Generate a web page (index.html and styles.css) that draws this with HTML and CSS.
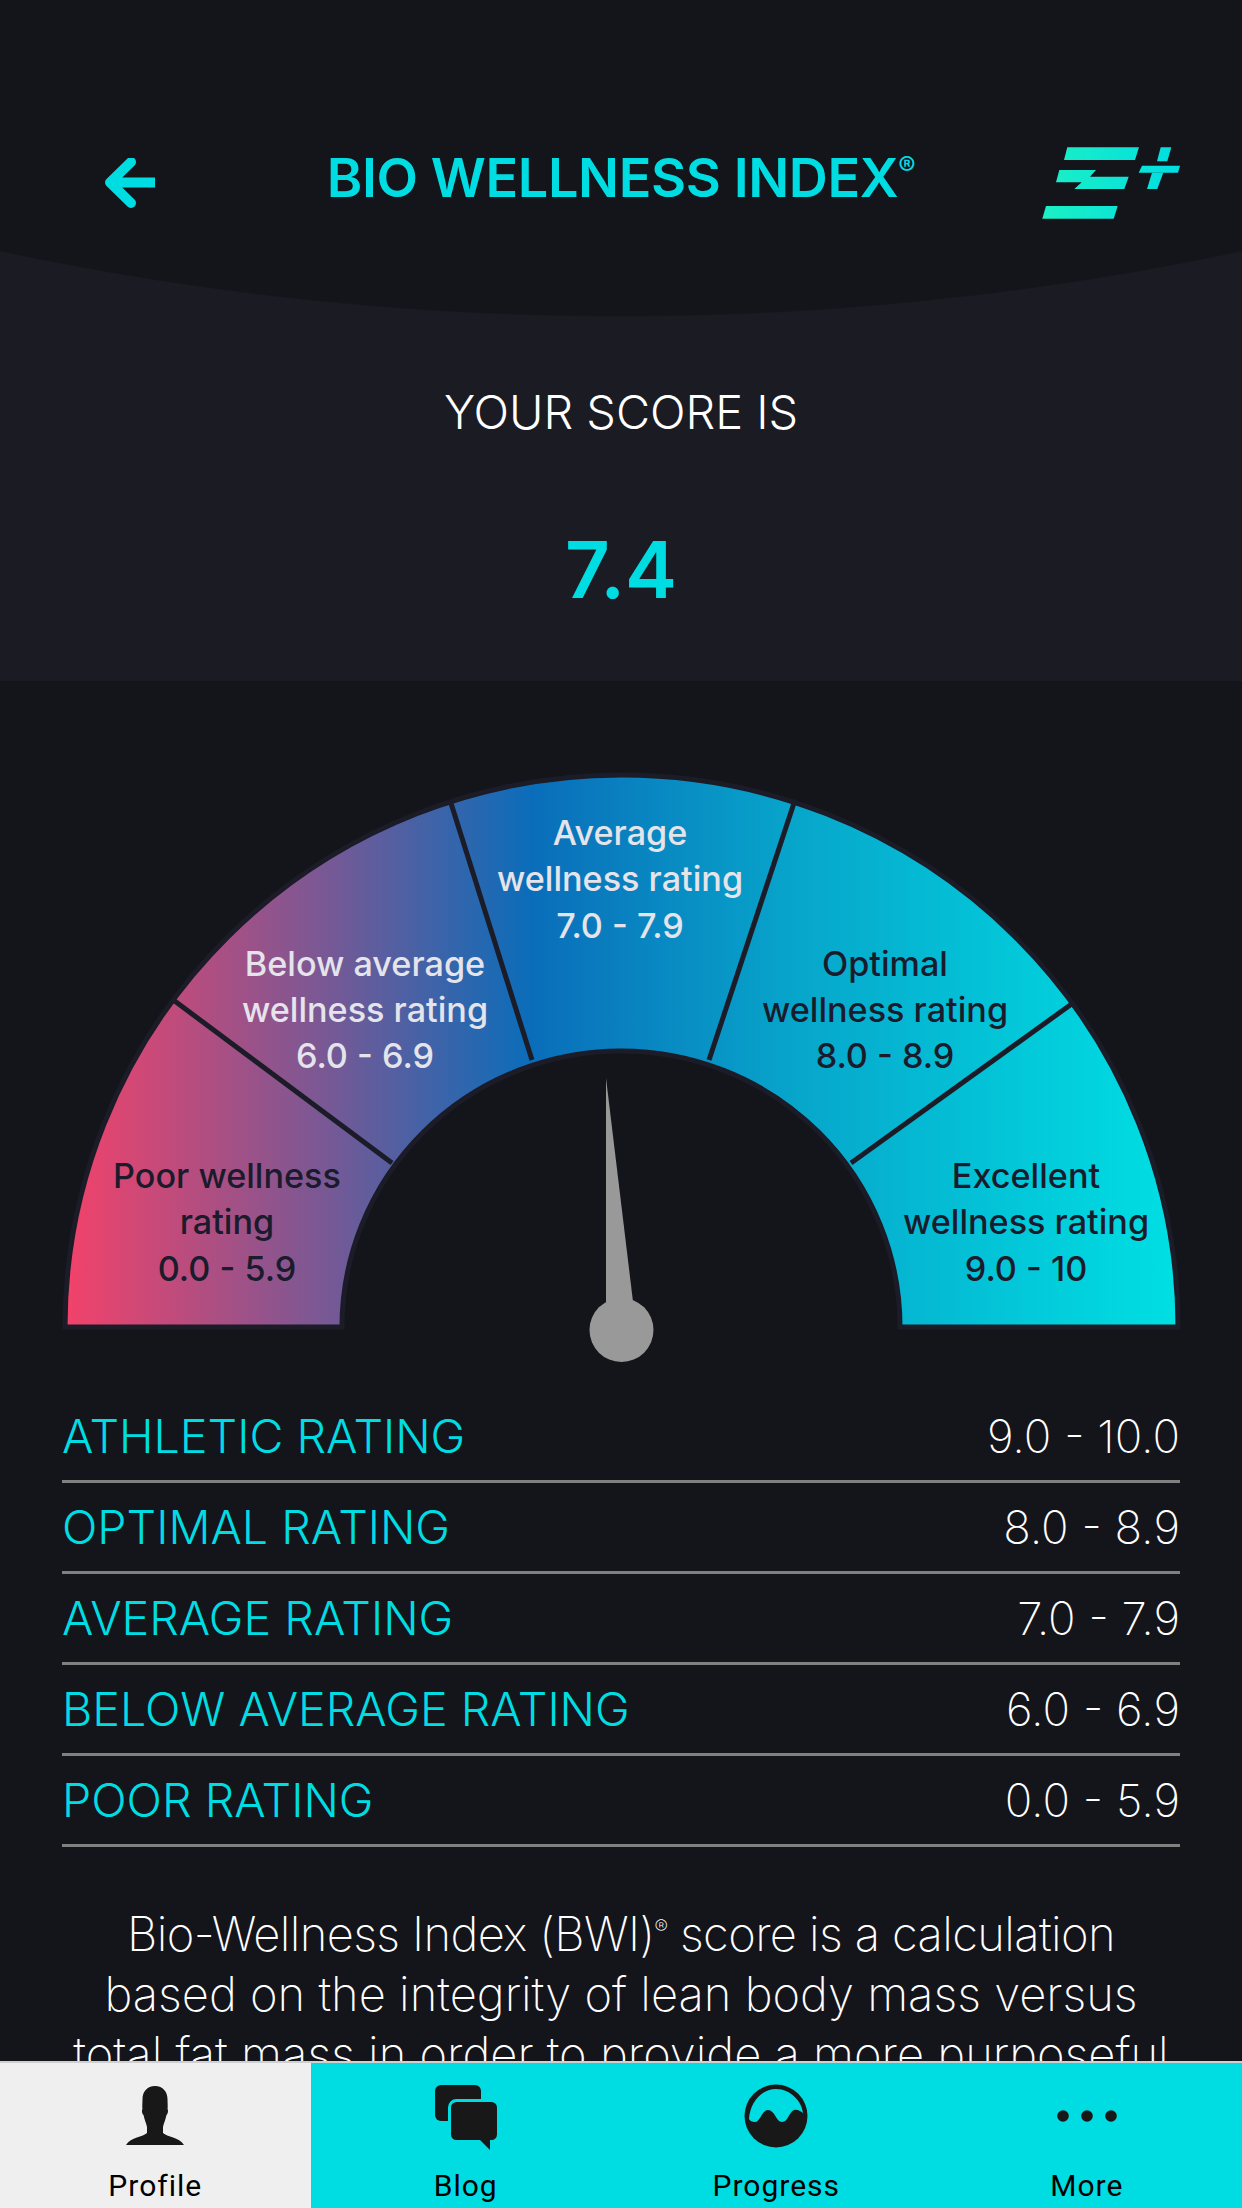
FILE: index.html
```html
<!DOCTYPE html>
<html lang="en">
<head>
    <meta charset="UTF-8">
    <meta name="viewport" content="width=device-width, initial-scale=1.0">
    <title>Bio Wellness Index</title>
    <link rel="stylesheet" href="styles.css">
</head>
<body>
    <div class="page">
        <div class="scroll">
            <div class="top">
                <div class="header">
                    <svg class="back" viewBox="105 158 50 50">
                        <path d="M131 162 L110 182.5 L131 203 M112 182.5 H155" fill="none" stroke="#00dde2" stroke-width="10" stroke-linecap="round" stroke-linejoin="round"/>
                    </svg>
                    <h1 class="title">BIO WELLNESS INDEX<sup>®</sup></h1>
                    <svg class="logo" viewBox="1042 147 138 72">
                        <defs>
                            <linearGradient id="logoFill" gradientUnits="userSpaceOnUse" x1="1042" y1="0" x2="1180" y2="0">
                                <stop offset="0" stop-color="#1cf0c4"/>
                                <stop offset="1" stop-color="#00dde2"/>
                            </linearGradient>
                        </defs>
                        <g fill="url(#logoFill)">
                            <polygon points="1067.3,147.3 1139,147.3 1135,160 1064,160"/>
                            <polygon points="1059.3,170 1096,170 1090,176.7 1128.7,176.7 1124.3,189 1074.3,189 1081.7,182.3 1056,182.3"/>
                            <polygon points="1046,206 1117.7,206 1113.7,218.7 1042.3,218.7"/>
                            <polygon points="1160.7,147.3 1171.3,147.3 1167.3,161.3 1157,161.3"/>
                            <polygon points="1142,165.7 1180,165.7 1178,172.7 1138.7,172.7"/>
                            <polygon points="1152,172.7 1163.3,172.7 1157.3,189 1147,189"/>
                        </g>
                    </svg>
                </div>
                <p class="score-label">YOUR SCORE IS</p>
                <p class="score">7.4</p>
            </div>

            <svg class="gauge" viewBox="0 681 1242 711">
                <defs>
                    <linearGradient id="gaugeFill" gradientUnits="userSpaceOnUse" x1="67" y1="0" x2="1174" y2="0">
                        <stop offset="0" stop-color="#f2426a"/>
                        <stop offset="0.25" stop-color="#6f5a98"/>
                        <stop offset="0.42" stop-color="#0a6dba"/>
                        <stop offset="0.66" stop-color="#07a6cb"/>
                        <stop offset="1" stop-color="#00dfe3"/>
                    </linearGradient>
                </defs>
                <path d="M65 1327 A556.5 552 0 0 1 1178 1327 H900 A279 276 0 0 0 342 1327 Z" fill="url(#gaugeFill)" stroke="#1b1c27" stroke-width="5"/>
                <g stroke="#1b1c27" stroke-width="5">
                    <line x1="172" y1="999" x2="392" y2="1163"/>
                    <line x1="450" y1="800" x2="532" y2="1060"/>
                    <line x1="795" y1="800" x2="709" y2="1060"/>
                    <line x1="1073" y1="1003" x2="851" y2="1163"/>
                </g>

                <text class="gauge-text dark" x="227" y="1188">Poor wellness</text>
                <text class="gauge-text dark" x="227" y="1234">rating</text>
                <text class="gauge-text dark" x="227" y="1281">0.0 - 5.9</text>

                <text class="gauge-text light" x="365" y="976">Below average</text>
                <text class="gauge-text light" x="365" y="1022">wellness rating</text>
                <text class="gauge-text light" x="365" y="1068">6.0 - 6.9</text>

                <text class="gauge-text light" x="620" y="845">Average</text>
                <text class="gauge-text light" x="620" y="891">wellness rating</text>
                <text class="gauge-text light" x="620" y="938">7.0 - 7.9</text>

                <text class="gauge-text dark" x="885" y="976">Optimal</text>
                <text class="gauge-text dark" x="885" y="1022">wellness rating</text>
                <text class="gauge-text dark" x="885" y="1068">8.0 - 8.9</text>

                <text class="gauge-text dark" x="1026" y="1188">Excellent</text>
                <text class="gauge-text dark" x="1026" y="1234">wellness rating</text>
                <text class="gauge-text dark" x="1026" y="1281">9.0 - 10</text>

                <polygon points="606,1078 634,1310 606,1310" fill="#999999"/>
                <circle cx="621.5" cy="1330" r="32" fill="#999999"/>
            </svg>

            <ul class="ratings">
                <li><span class="rating-name">ATHLETIC RATING</span><span class="rating-range">9.0 - 10.0</span></li>
                <li><span class="rating-name">OPTIMAL RATING</span><span class="rating-range">8.0 - 8.9</span></li>
                <li><span class="rating-name">AVERAGE RATING</span><span class="rating-range">7.0 - 7.9</span></li>
                <li><span class="rating-name">BELOW AVERAGE RATING</span><span class="rating-range">6.0 - 6.9</span></li>
                <li><span class="rating-name">POOR RATING</span><span class="rating-range">0.0 - 5.9</span></li>
            </ul>

            <p class="about"><span class="about-first">Bio-Wellness Index (BWI)<sup>®</sup> score is a calculation</span><br>based on the integrity of lean body mass versus<br>total fat mass in order to provide a more purposeful</p>
        </div>

        <div class="tabs">
            <div class="tab active">
                <svg class="tab-icon" viewBox="0 0 64 64">
                    <path d="M32 2 C40 2 44.5 8 44.5 15 C44.5 19 45 23 44.5 25 C45.5 26 45 30 43.5 31 C42.5 36 40.5 40 40 43 L40 49 C44 53 56 53 61 61 H3 C8 53 20 53 24 49 L24 43 C23.5 40 21.5 36 20.5 31 C19 30 18.5 26 19.5 25 C19 23 19.5 19 19.5 15 C19.5 8 24 2 32 2 Z" fill="#181818"/>
                </svg>
                <span>Profile</span>
            </div>
            <div class="tab">
                <svg class="tab-icon" viewBox="0 0 64 64">
                    <rect x="1" y="1" width="46" height="36" rx="6" fill="#181818"/>
                    <rect x="15.5" y="16.5" width="49" height="41" rx="7" fill="#181818" stroke="#00dde2" stroke-width="3"/>
                    <polygon points="44,54 56,54 56,66" fill="#181818"/>
                </svg>
                <span>Blog</span>
            </div>
            <div class="tab">
                <svg class="tab-icon" viewBox="0 0 64 64">
                    <circle cx="32" cy="32" r="31.5" fill="#181818"/>
                    <path d="M5 35 C6 19 17 5 32 5 C47 5 58 18 59 29 C56 26.5 53 25 50 26 C45 28 44 38 38 38 C32 38 31 26 24 26 C18 26 16 38 11 38 C8 38 6 37 5 35 Z" fill="#00dde2"/>
                </svg>
                <span>Progress</span>
            </div>
            <div class="tab">
                <svg class="tab-icon" viewBox="0 0 64 64">
                    <circle cx="8" cy="32" r="5.8" fill="#181818"/>
                    <circle cx="32" cy="32" r="5.8" fill="#181818"/>
                    <circle cx="56" cy="32" r="5.8" fill="#181818"/>
                </svg>
                <span>More</span>
            </div>
        </div>
    </div>
</body>
</html>
```

FILE: styles.css
```css
body{
    margin: 0;
    background: #14141b;
    font-family: "Inter", "Liberation Sans", sans-serif;
}
.page{
    width: 1242px;
    height: 2208px;
    display: flex;
    flex-direction: column;
    overflow: hidden;
}
.scroll{
    flex: 1;
    min-height: 0;
    overflow: hidden;
}

/* top block: curved header over the lighter score panel */
.top{
    height: 681px;
    box-sizing: border-box;
    padding-top: 148px;
    background: radial-gradient(circle 2999px at 621px -2682px, #14141b 99.95%, #1a1b23 100%);
    text-align: center;
}
.header{
    display: grid;
    grid-template-columns: 1fr auto 1fr;
    align-items: start;
    padding: 0 62px;
}
.back{
    width: 50px;
    height: 50px;
    margin: 10px 0 0 43px;
}
.title{
    margin: 0;
    color: #00dde2;
    font-size: 54px;
    line-height: 60px;
    font-weight: 600;
    letter-spacing: -0.4px;
}
.title sup{
    font-size: 26px;
    font-weight: 500;
    line-height: 0;
    vertical-align: 22px;
}
.logo{
    width: 138px;
    height: 72px;
    margin-top: -1px;
    justify-self: end;
}
.score-label{
    margin: 0;
    padding-top: 166px;
    color: #ffffff;
    font-size: 46.8px;
    line-height: 54px;
    font-weight: 300;
}
.score{
    margin: 0;
    padding-top: 86px;
    color: #00dde2;
    font-size: 78px;
    line-height: 90px;
    font-weight: 600;
}

.gauge{
    display: block;
    width: 1242px;
    height: 711px;
}
.gauge-text{
    font-size: 34.2px;
    font-weight: 500;
    text-anchor: middle;
}
.gauge-text.dark{
    fill: #1a1b2b;
}
.gauge-text.light{
    fill: #e4e4ea;
}

.ratings{
    list-style: none;
    margin: 0 62px;
    padding: 0;
}
.ratings li{
    display: flex;
    justify-content: space-between;
    align-items: center;
    height: 88px;
    border-bottom: 3px solid #808080;
}
.rating-name{
    color: #00dde2;
    font-size: 46.6px;
    font-weight: 300;
}
.rating-range{
    color: #ffffff;
    font-size: 45.6px;
    font-weight: 200;
}

.about{
    margin: 0;
    padding-top: 57px;
    color: #ffffff;
    font-size: 47.1px;
    line-height: 60px;
    font-weight: 150;
    text-align: center;
    white-space: nowrap;
}
.about-first{
    letter-spacing: -0.63px;
}
.about sup{
    font-size: 20px;
    line-height: 0;
}

.tabs{
    display: flex;
    height: 147px;
    flex-shrink: 0;
    background: #00dde2;
    border-top: 2px solid #cfcfcf;
    box-sizing: border-box;
}
.tab{
    flex: 1;
    display: flex;
    flex-direction: column;
    align-items: center;
    padding-top: 21px;
    box-sizing: border-box;
    color: #000000;
    font-family: "Roboto", "Liberation Sans", sans-serif;
    font-size: 30px;
    letter-spacing: 1px;
}
.tab.active{
    background: #efefef;
}
.tab-icon{
    width: 64px;
    height: 64px;
    overflow: visible;
    margin-bottom: 20px;
}
```
